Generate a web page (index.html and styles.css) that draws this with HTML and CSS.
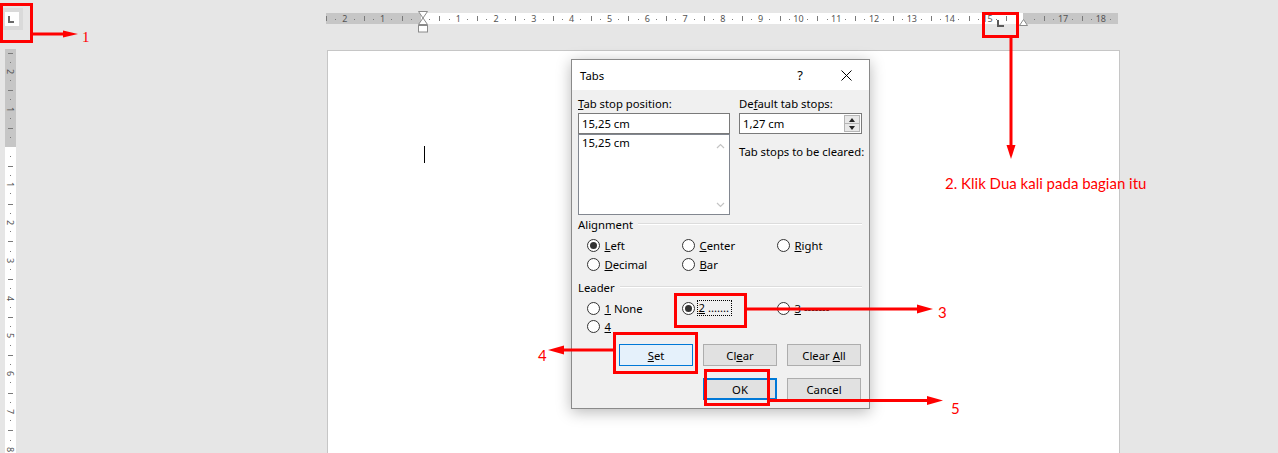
FILE: index.html
```html
<!DOCTYPE html>
<html>
<head>
<meta charset="utf-8">
<link rel="stylesheet" href="styles.css">
</head>
<body>
<div class="app">
  <div class="corner">
    <div class="tabsel"><div class="tabsel-inner"><svg width="14" height="14"><path d="M4 4V10H9" fill="none" stroke="#6a6a6a" stroke-width="2"/></svg></div></div>
  </div>
  <div class="hruler-wrap">
    <div class="hruler">
      <span class="hc">2</span><span class="hc">1</span><span class="hc"></span><span class="hc">1</span><span class="hc">2</span><span class="hc">3</span><span class="hc">4</span><span class="hc">5</span><span class="hc">6</span><span class="hc">7</span><span class="hc">8</span><span class="hc">9</span><span class="hc">10</span><span class="hc">11</span><span class="hc">12</span><span class="hc">13</span><span class="hc">14</span><span class="hc">15</span><span class="hc"></span><span class="hc">17</span><span class="hc">18</span>
    </div>
    <svg class="mk-indent" width="11" height="22"><path d="M0.5 0.5H9.5L5 7L9.5 13.5H0.5L5 7Z" fill="#fff" stroke="#8a8a8a"/><rect x="0.5" y="14.5" width="9" height="6.5" fill="#fff" stroke="#8a8a8a"/></svg>
    <svg class="mk-right" width="10" height="8"><path d="M0.5 6.5L4.5 0.5L8.5 6.5Z" fill="#fff" stroke="#8a8a8a"/></svg>
    <svg class="mk-tab" width="8" height="8"><path d="M1 0V6H7" fill="none" stroke="#5a5a5a" stroke-width="2"/></svg>
  </div>
  <div class="vruler">
    <span class="vc"><b>2</b></span><span class="vc"><b>1</b></span><span class="vc"></span><span class="vc"><b>1</b></span><span class="vc"><b>2</b></span><span class="vc"><b>3</b></span><span class="vc"><b>4</b></span><span class="vc"><b>5</b></span><span class="vc"><b>6</b></span><span class="vc"><b>7</b></span><span class="vc"><b>8</b></span>
  </div>
  <div class="page">
    <div class="caret"></div>
  </div>
</div>

<div class="dialog">
  <div class="titlebar">
    <span class="title">Tabs</span>
    <span class="tb-btn">?</span>
    <span class="tb-btn"><svg width="11" height="11"><path d="M0.5 0.5L10.5 10.5M10.5 0.5L0.5 10.5" stroke="#000" stroke-width="1"/></svg></span>
  </div>
  <div class="dbody">
    <div class="topgrid">
      <div class="col">
        <div class="lbl"><u>T</u>ab stop position:</div>
        <div class="field">15,25 cm</div>
        <div class="listbox">
          <div class="list-items">15,25 cm</div>
          <div class="scroll">
            <svg width="9" height="6"><path d="M1 5L4.5 1.5L8 5" fill="none" stroke="#c4c4c4" stroke-width="1.2"/></svg>
            <svg width="9" height="6"><path d="M1 1L4.5 4.5L8 1" fill="none" stroke="#c4c4c4" stroke-width="1.2"/></svg>
          </div>
        </div>
      </div>
      <div class="col">
        <div class="lbl">De<u>f</u>ault tab stops:</div>
        <div class="field spin">1,27 cm<span class="spinbtn"><span class="sp-up"></span><span class="sp-down"></span></span></div>
        <div class="lbl cleared">Tab stops to be cleared:</div>
      </div>
    </div>

    <div class="group-h"><span>Alignment</span><i></i></div>
    <div class="radios align">
      <div class="radio on"><span class="circ"></span><span><u>L</u>eft</span></div>
      <div class="radio"><span class="circ"></span><span><u>C</u>enter</span></div>
      <div class="radio"><span class="circ"></span><span><u>R</u>ight</span></div>
      <div class="radio"><span class="circ"></span><span><u>D</u>ecimal</span></div>
      <div class="radio"><span class="circ"></span><span><u>B</u>ar</span></div>
    </div>

    <div class="group-h leader-h"><span>Leader</span><i></i></div>
    <div class="radios leader">
      <div class="radio"><span class="circ"></span><span><u>1</u> None</span></div>
      <div class="radio on"><span class="circ"></span><span class="focus"><u>2</u> .......</span></div>
      <div class="radio"><span class="circ"></span><span><u>3</u> -------</span></div>
      <div class="radio"><span class="circ"></span><span><u>4</u></span></div>
    </div>

    <div class="btnrow">
      <span class="btn set"><span><u>S</u>et</span></span>
      <span class="btn"><span>Cl<u>e</u>ar</span></span>
      <span class="btn"><span>Clear <u>A</u>ll</span></span>
    </div>
    <div class="btnrow second">
      <span class="btn ok"><span>OK</span></span>
      <span class="btn"><span>Cancel</span></span>
    </div>
  </div>
</div>

<svg class="marks" width="1278" height="453">
  <g fill="none" stroke="#ff0000" stroke-width="3">
    <rect x="1.5" y="4.5" width="30" height="37"/>
    <rect x="983.5" y="13.5" width="34" height="23"/>
    <rect x="675.5" y="294.5" width="70" height="32"/>
    <rect x="614.5" y="333.5" width="82" height="39"/>
    <rect x="705.5" y="370.5" width="63" height="34"/>
    <path d="M33 34H64"/>
    <path d="M1011 38V147"/>
    <path d="M747 309H919"/>
    <path d="M613 350H562"/>
    <path d="M770 400.5H929"/>
  </g>
  <g fill="#ff0000">
    <path d="M63 30.5L78 34L63 37.5Z"/>
    <path d="M1006.5 145L1011 159L1015.5 145Z"/>
    <path d="M917 304.5L933 309L917 313.5Z"/>
    <path d="M564 345.5L548 350L564 354.5Z"/>
    <path d="M927 396L943 400.5L927 405Z"/>
  </g>
</svg>
<span class="note n1">1</span>
<span class="note n2">2. Klik Dua kali pada bagian itu</span>
<span class="note n3">3</span>
<span class="note n4">4</span>
<span class="note n5">5</span>
</body>
</html>
```

FILE: styles.css
```css
* { box-sizing: border-box; }
html, body { margin: 0; padding: 0; }
body {
  width: 1278px;
  height: 453px;
  overflow: hidden;
  background: #e6e6e6;
  position: relative;
  font-family: "Noto Sans", "Liberation Sans", sans-serif;
}
.app {
  display: grid;
  grid-template-columns: 326px 794px;
  grid-template-rows: 49px 404px;
}
.corner { padding: 8px 0 0 3px; }
.tabsel {
  width: 20px;
  height: 22px;
  background: #dadada;
  padding: 4px 0 0 2px;
}
.tabsel-inner {
  width: 14px;
  height: 14px;
  background: #fff;
}
.tabsel-inner svg { display: block; }

.hruler-wrap {
  position: relative;
  padding-top: 13px;
}
.hruler {
  height: 11px;
  width: 792px;
  display: flex;
  overflow: hidden;
  background: linear-gradient(to right, #c6c6c6 0 95px, #fff 95px 697px, #c6c6c6 697px);
}
.hc {
  flex: none;
  width: 37.8px;
  height: 11px;
  font-size: 9px;
  line-height: 12px;
  text-align: center;
  color: #555;
  background:
    linear-gradient(#7a7a7a, #7a7a7a) 0 55% / 1px 5px no-repeat,
    linear-gradient(#7a7a7a, #7a7a7a) 25% 55% / 1px 1px no-repeat,
    linear-gradient(#7a7a7a, #7a7a7a) 75% 55% / 1px 1px no-repeat;
}
.mk-indent { position: absolute; left: 92px; top: 11px; }
.mk-right { position: absolute; left: 693px; top: 19px; }
.mk-tab { position: absolute; left: 671px; top: 20px; }

.vruler {
  margin-left: 5px;
  width: 11px;
  height: 404px;
  padding-top: 3.5px;
  display: flex;
  flex-direction: column;
  overflow: hidden;
  background: linear-gradient(#c6c6c6 0 98px, #fff 98px);
}
.vc {
  flex: none;
  height: 37.8px;
  width: 11px;
  display: flex;
  align-items: center;
  justify-content: center;
  font-size: 9px;
  color: #555;
  background:
    linear-gradient(#7a7a7a, #7a7a7a) 50% 0 / 5px 1px no-repeat,
    linear-gradient(#7a7a7a, #7a7a7a) 50% 25% / 1px 1px no-repeat,
    linear-gradient(#7a7a7a, #7a7a7a) 50% 75% / 1px 1px no-repeat;
}
.vc b { font-weight: normal; display: inline-block; transform: rotate(90deg); line-height: 1; }

.page {
  margin: 1px 0 0 1px;
  width: 793px;
  height: 403px;
  background: #fff;
  border: 1px solid #c6c6c6;
  border-bottom: none;
  padding: 95px 0 0 96px;
}
.caret { width: 1px; height: 17px; background: #000; }

/* Dialog */
.dialog {
  position: absolute;
  left: 571px;
  top: 59px;
  width: 299px;
  height: 350px;
  border: 1px solid #8a8a8a;
  background: #f0f0f0;
  box-shadow: 0 3px 14px rgba(0, 0, 0, 0.28);
  font-size: 11.3px;
  color: #000;
}
.titlebar {
  height: 30px;
  background: #fff;
  display: flex;
  align-items: center;
}
.title { flex: 1; padding-left: 8px; }
.tb-btn {
  width: 46px;
  height: 30px;
  display: flex;
  align-items: center;
  justify-content: center;
  font-size: 13px;
}
.tb-btn svg { display: block; }
.dbody { padding: 6px 7px 0 6px; }
.topgrid {
  display: grid;
  grid-template-columns: 152px 123px;
  column-gap: 9px;
}
.lbl { height: 16px; line-height: 16px; margin-bottom: 1px; white-space: nowrap; }
.cleared { margin-top: 10px; }
.field {
  height: 21px;
  background: #fff;
  border: 1px solid #7a7a7a;
  padding: 0 3px;
  line-height: 19px;
  position: relative;
}
.listbox {
  height: 81px;
  background: #fff;
  border: 1px solid #828790;
  display: flex;
}
.list-items { flex: 1; padding: 0 3px; line-height: 15px; }
.scroll {
  width: 17px;
  display: flex;
  flex-direction: column;
  justify-content: space-between;
  align-items: center;
  padding: 8px 0 6px;
}
.scroll svg { display: block; }
.spinbtn {
  position: absolute;
  right: 1px;
  top: 1px;
  width: 16px;
  height: 17px;
  border: 1px solid #b5b5b5;
  background: #e8e8e8;
  display: flex;
  flex-direction: column;
}
.sp-up, .sp-down { flex: 1; display: flex; align-items: center; justify-content: center; }
.sp-up { border-bottom: 1px solid #b5b5b5; }
.sp-up::before {
  content: "";
  border-left: 3px solid transparent;
  border-right: 3px solid transparent;
  border-bottom: 4px solid #222;
}
.sp-down::before {
  content: "";
  border-left: 3px solid transparent;
  border-right: 3px solid transparent;
  border-top: 4px solid #222;
}

.group-h {
  display: flex;
  align-items: center;
  height: 16px;
  margin-top: 1px;
}
.group-h i {
  flex: 1;
  height: 2px;
  margin-left: 5px;
  border-top: 1px solid #dcdcdc;
  border-bottom: 1px solid #fff;
}
.leader-h { margin-top: 5px; }
.radios {
  display: grid;
  grid-template-columns: 95px 95px 95px;
  padding-left: 8.5px;
}
.align { margin-top: 4px; grid-auto-rows: 19px; }
.leader { margin-top: 4px; grid-auto-rows: 18px; }
.radio { display: flex; align-items: center; white-space: pre; }
.circ {
  width: 13px;
  height: 13px;
  border: 1px solid #333;
  border-radius: 50%;
  background: #fff;
  margin-right: 5px;
  flex: none;
  display: flex;
  align-items: center;
  justify-content: center;
}
.on .circ::after {
  content: "";
  width: 7px;
  height: 7px;
  border-radius: 50%;
  background: #333;
}
.focus {
  outline: 1px dotted #000;
  padding: 0 2px 0 1px;
  margin-left: -2px;
  line-height: 14px;
}

.btnrow {
  display: flex;
  justify-content: flex-end;
  gap: 10px;
  padding-right: 1px;
  margin-top: 9px;
}
.btnrow.second { margin-top: 12px; }
.btn {
  width: 74px;
  height: 22px;
  border: 1px solid #adadad;
  background: #e1e1e1;
  display: flex;
  align-items: center;
  justify-content: center;
  white-space: pre;
}
.btn.set { border-color: #0078d7; background: #e5f1fb; }
.btn.ok { border: 2px solid #0078d7; }

.marks { position: absolute; left: 0; top: 0; pointer-events: none; }
.note {
  position: absolute;
  color: #ff0000;
  font-family: "Lato", "Liberation Sans", sans-serif;
  font-size: 15px;
  line-height: 16px;
  white-space: nowrap;
}
.n1 { left: 82px; top: 29px; font-family: "Liberation Serif", serif; font-size: 15px; }
.n2 { left: 945px; top: 175px; }
.n3 { left: 938px; top: 304px; }
.n4 { left: 538px; top: 347px; }
.n5 { left: 951px; top: 400px; }
```
